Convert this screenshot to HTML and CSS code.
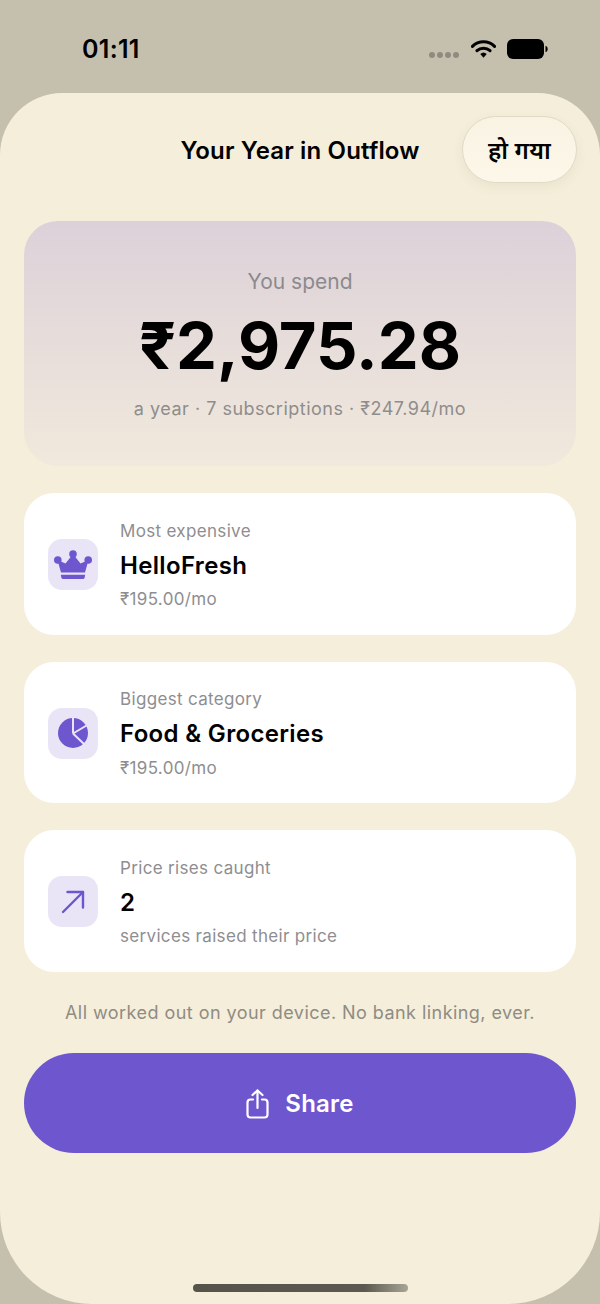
FILE: index.html
```html
<!DOCTYPE html>
<html lang="en">
<head>
    <meta charset="UTF-8">
    <meta name="viewport" content="width=device-width, initial-scale=1.0">
    <title>Your Year in Outflow</title>
    <link rel="stylesheet" href="styles.css">
</head>
<body>

    <!-- Status bar -->
    <div class="status-bar">
        <span class="time">01:11</span>
        <div class="status-icons">
            <div class="signal"><i></i><i></i><i></i><i></i></div>
            <svg class="wifi" width="25" height="20" viewBox="0 0 26 20">
                <path d="M1.5 7.2a16.5 16.5 0 0 1 23 0" fill="none" stroke="#000" stroke-width="3.2" stroke-linecap="round"/>
                <path d="M6.2 11.8a10 10 0 0 1 13.6 0" fill="none" stroke="#000" stroke-width="3.2" stroke-linecap="round"/>
                <path d="M9.6 15.2a5 5 0 0 1 6.8 0L13 19z" fill="#000"/>
            </svg>
            <svg class="battery" width="41" height="20" viewBox="0 0 41 20">
                <rect x="0" y="0" width="37" height="20" rx="6" fill="#000"/>
                <path d="M38.5 6.8c1.4.4 2.2 1.7 2.2 3.2s-.8 2.8-2.2 3.2z" fill="#000"/>
            </svg>
        </div>
    </div>

    <div class="sheet">
        <header class="sheet-header">
            <h1>Your Year in Outflow</h1>
            <button class="done-btn">हो गया</button>
        </header>

        <section class="hero">
            <div class="hero-label">You spend</div>
            <div class="hero-amount">₹2,975.28</div>
            <div class="hero-sub">a year · 7 subscriptions · ₹247.94/mo</div>
        </section>

        <div class="card">
            <div class="card-icon">
                <svg width="38" height="30" viewBox="0 0 38 30" fill="#6e56cf">
                    <circle cx="19" cy="4" r="3.8"/>
                    <circle cx="3.8" cy="10" r="3.8"/>
                    <circle cx="34.2" cy="10" r="3.8"/>
                    <path d="M19 4l7.5 9.5L34.5 10 31 22.4H7L3.5 10l8 3.5z"/>
                    <path d="M6.8 24.8h24.4l-.5 2.6a2 2 0 0 1-2 1.6H9.3a2 2 0 0 1-2-1.6z"/>
                </svg>
            </div>
            <div class="card-text">
                <div class="card-label">Most expensive</div>
                <div class="card-value">HelloFresh</div>
                <div class="card-note">₹195.00/mo</div>
            </div>
        </div>

        <div class="card">
            <div class="card-icon">
                <svg width="30" height="30" viewBox="0 0 30 30">
                    <circle cx="15" cy="15" r="15" fill="#6e56cf"/>
                    <path d="M15 15.5V0M15 15.5L28.5 7.5M15 15.5L26.5 26.5" fill="none" stroke="#e9e5f7" stroke-width="2"/>
                </svg>
            </div>
            <div class="card-text">
                <div class="card-label">Biggest category</div>
                <div class="card-value">Food &amp; Groceries</div>
                <div class="card-note">₹195.00/mo</div>
            </div>
        </div>

        <div class="card">
            <div class="card-icon">
                <svg width="24" height="24" viewBox="0 0 24 24" fill="none" stroke="#6e56cf" stroke-width="2.4" stroke-linecap="round" stroke-linejoin="round">
                    <path d="M2 22L22 2"/>
                    <path d="M6.5 2H22V17.5"/>
                </svg>
            </div>
            <div class="card-text">
                <div class="card-label">Price rises caught</div>
                <div class="card-value">2</div>
                <div class="card-note">services raised their price</div>
            </div>
        </div>

        <p class="footnote">All worked out on your device. No bank linking, ever.</p>

        <button class="share-btn">
            <svg width="23" height="30" viewBox="0 0 23 30" fill="none" stroke="#fff" stroke-width="2.2" stroke-linecap="round" stroke-linejoin="round">
                <path d="M7 10.5H4.5a3 3 0 0 0-3 3V25.5a3 3 0 0 0 3 3h14a3 3 0 0 0 3-3V13.5a3 3 0 0 0-3-3H16"/>
                <path d="M11.5 19V1.5"/>
                <path d="M6.5 6l5-4.5 5 4.5"/>
            </svg>
            <span>Share</span>
        </button>

        <div class="home-indicator"></div>
    </div>

</body>
</html>
```

FILE: styles.css
```css
body {
    margin: 0;
    width: 600px;
    height: 1304px;
    overflow: hidden;
    background-color: #c5bfae;
    font-family: 'Inter', 'Noto Sans', sans-serif;
    color: #000;
    display: flex;
    flex-direction: column;
}

/* Status bar */
.status-bar {
    height: 93px;
    flex-shrink: 0;
    display: flex;
    justify-content: space-between;
    align-items: flex-start;
    padding: 0 52px 0 82px;
    box-sizing: border-box;
}
.time {
    margin-top: 34px;
    font-size: 25px;
    line-height: 30px;
    font-weight: 600;
    letter-spacing: 0.3px;
}
.status-icons {
    margin-top: 39px;
    display: flex;
    align-items: flex-start;
    gap: 11px;
}
.signal {
    display: flex;
    gap: 2px;
    margin-top: 13px;
    margin-right: 1px;
}
.signal i {
    width: 6px;
    height: 6px;
    border-radius: 50%;
    background-color: #8f8b80;
}

/* Sheet */
.sheet {
    flex: 1;
    background-color: #f5eeda;
    border-radius: 62px 62px 92px 92px;
    padding: 0 24px;
    display: flex;
    flex-direction: column;
}
.sheet-header {
    display: grid;
    grid-template-columns: 1fr auto 1fr;
    align-items: center;
    padding-top: 23px;
    margin-bottom: 38px;
}
.sheet-header h1 {
    grid-column: 2;
    margin: 2px 0 0;
    font-size: 24px;
    font-weight: 600;
    letter-spacing: 0.15px;
}
.done-btn {
    grid-column: 3;
    justify-self: end;
    width: 115px;
    height: 67px;
    margin-right: -1px;
    border: 1px solid #e0d9c6;
    border-radius: 34px;
    background: linear-gradient(180deg, #f8f3e3, #fcf7e8);
    box-shadow: 0 4px 12px rgba(90, 80, 50, 0.07);
    font-family: 'Inter', 'Noto Sans', sans-serif;
    font-size: 24px;
    font-weight: 600;
    letter-spacing: 0.3px;
    color: #000;
    padding: 0;
}

/* Summary */
.hero {
    height: 245px;
    box-sizing: border-box;
    padding-top: 48px;
    border-radius: 34px;
    background: linear-gradient(180deg, #dcd1d9, #f1e9dc);
    text-align: center;
    margin-bottom: 27px;
}
.hero-label {
    font-size: 21px;
    line-height: 26px;
    color: #8c8a8d;
}
.hero-amount {
    margin-top: 11px;
    font-size: 65px;
    line-height: 80px;
    font-weight: 700;
}
.hero-sub {
    margin-top: 11px;
    font-size: 18px;
    line-height: 24px;
    letter-spacing: 0.5px;
    color: #8f8d8c;
}

/* Stat cards */
.card {
    height: 141.5px;
    flex-shrink: 0;
    box-sizing: border-box;
    background-color: #fff;
    border-radius: 30px;
    padding: 2px 24px 0;
    margin-bottom: 27px;
    display: flex;
    align-items: center;
    gap: 22px;
}
.card-icon {
    width: 50px;
    height: 51px;
    border-radius: 14px;
    background-color: #e9e5f7;
    display: flex;
    align-items: center;
    justify-content: center;
    flex-shrink: 0;
}
.card-label, .card-note {
    font-size: 17px;
    line-height: 22px;
    letter-spacing: 0.33px;
    color: #8e8e90;
}
.card-value {
    font-size: 24px;
    line-height: 30px;
    font-weight: 600;
    letter-spacing: 0.33px;
    margin: 9px 0 7.5px;
}

.footnote {
    margin: 0.5px 0 0;
    font-size: 18px;
    line-height: 28px;
    letter-spacing: 0.45px;
    text-align: center;
    color: #8f8c84;
}
.share-btn {
    margin-top: 26px;
    height: 100px;
    flex-shrink: 0;
    border: none;
    border-radius: 50px;
    background-color: #6e56cf;
    color: #fff;
    font-family: 'Inter', 'Noto Sans', sans-serif;
    font-size: 24px;
    font-weight: 600;
    letter-spacing: 0.2px;
    display: flex;
    align-items: center;
    justify-content: center;
    gap: 16px;
    padding: 1px 0 0;
}
.home-indicator {
    margin: auto auto 12px;
    width: 215px;
    height: 8px;
    border-radius: 4px;
    background: linear-gradient(90deg, #55534a 0%, #5c5a50 80%, #a8a595 100%);
}
```
